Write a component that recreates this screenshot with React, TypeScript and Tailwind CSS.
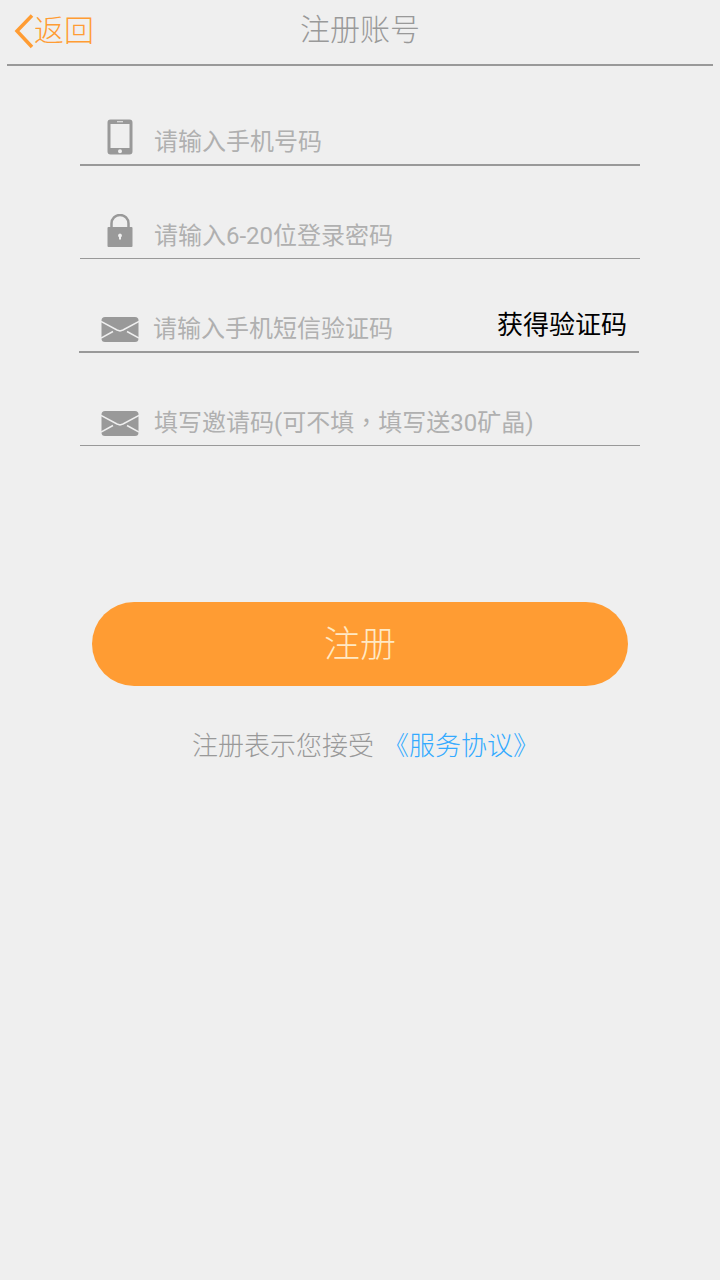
import React from 'react';

const cjk = "font-['Roboto','Noto_Sans_CJK_SC',sans-serif]";

function PhoneIcon() {
  return (
    <svg width="26" height="36" viewBox="0 0 26 36">
      <path
        fillRule="evenodd"
        fill="#999999"
        d="M3.500 0.500h19a3 3 0 0 1 3 3v29a3 3 0 0 1-3 3h-19a3 3 0 0 1-3-3v-29a3 3 0 0 1 3-3zM3.500 5v24h19V5zM10 2.200v1h6v-1zM13 30.200a2 2 0 1 0 0 4a2 2 0 0 0 0-4z"
      />
    </svg>
  );
}

function LockIcon() {
  return (
    <svg width="26" height="34" viewBox="0 0 26 34">
      <path d="M4.500 15V9.500a8.500 8.500 0 0 1 17 0V15" fill="none" stroke="#999999" strokeWidth="2.500" />
      <path
        fillRule="evenodd"
        fill="#999999"
        d="M1.500 13h23a1 1 0 0 1 1 1v18a1 1 0 0 1-1 1h-23a1 1 0 0 1-1-1v-18a1 1 0 0 1 1-1zM13 19.500a2 2 0 0 0-1 3.700v2.300h2v-2.300a2 2 0 0 0-1-3.700z"
      />
    </svg>
  );
}

function MailIcon() {
  return (
    <svg width="38" height="25" viewBox="0 0 38 25">
      <rect x="0.500" y="0" width="37" height="25" rx="3.500" fill="#999999" />
      <path d="M0 4.500L16 13L19 14L22 13L38 4.500M0 21L12 14.500M38 21L26 14.500" fill="none" stroke="#efefef" strokeWidth="1.500" />
    </svg>
  );
}

function Field({
  icon,
  placeholder,
  height,
  line,
  action,
  shift,
  iconPad,
}: {
  icon: React.ReactNode;
  placeholder: React.ReactNode;
  height: string;
  line: string;
  action?: string;
  shift?: string;
  iconPad?: string;
}) {
  return (
    <div className={`${height} ${line} ${shift ?? 'ml-[80px]'} w-[560px] flex items-end border-[#999999] pb-[5px]`}>
      <div className={`w-[74px] flex justify-center pl-[6px] shrink-0 ${iconPad ?? 'pb-[3px]'}`}>{icon}</div>
      <span className="text-[24px] leading-[34px] text-[#b0b0b0] whitespace-nowrap">{placeholder}</span>
      {action && (
        <span className="ml-auto mr-[12px] mb-[3px] text-[26px] leading-[36px] text-black whitespace-nowrap">{action}</span>
      )}
    </div>
  );
}

export default function App() {
  return (
    <div className={`w-[720px] h-[1280px] bg-[#efefef] overflow-hidden ${cjk}`}>
      {/* Header */}
      <header className="mx-[7px] h-[66px] border-b-2 border-[#999999] flex items-center relative font-light">
        <div className="flex items-center ml-[7px] text-[#ff9c33]">
          <svg width="20" height="36" viewBox="0 0 20 36">
            <path d="M18 1.500L3 17L18 33" fill="none" stroke="#ff9c33" strokeWidth="3.500" />
          </svg>
          <span className="text-[30px] leading-[38px] pb-[2px] whitespace-nowrap">返回</span>
        </div>
        <h1 className="absolute left-[293px] top-[10px] text-[30px] leading-[40px] font-light text-[#999999] whitespace-nowrap">注册账号</h1>
      </header>

      {/* Form */}
      <div>
        <Field icon={<PhoneIcon />} placeholder="请输入手机号码" height="h-[100px]" line="border-b-2" iconPad="pb-[4px]" />
        <Field icon={<LockIcon />} placeholder="请输入6-20位登录密码" height="h-[93px]" line="border-b" iconPad="pb-[5px]" />
        <Field
          icon={<MailIcon />}
          placeholder="请输入手机短信验证码"
          height="h-[94px]"
          line="border-b-2"
          action="获得验证码"
          shift="ml-[79px]"
          iconPad="pb-[4px] ml-[1px] -mr-[1px]"
        />
        <Field
          icon={<MailIcon />}
          placeholder={
            <>
              填写邀请码(可不填<span className="font-['Noto_Sans_CJK_TC',sans-serif]">，</span>填写送30矿晶)
            </>
          }
          height="h-[93px]"
          line="border-b"
          iconPad="pb-[4px]"
        />
      </div>

      {/* Submit */}
      <button className="block ml-[92px] mt-[156px] w-[536px] h-[84px] rounded-[42px] bg-[#ff9c33] pt-[2px] text-[36px] font-light text-[#ffe9c4]">
        注册
      </button>

      <p className="mt-[40px] flex justify-center pl-[11px] text-[26px] leading-[40px] font-light text-[#999999] whitespace-nowrap">
        <span>注册表示您接受</span>
        <span className="ml-[9px] text-[#33aaff]">《服务协议》</span>
      </p>
    </div>
  );
}
